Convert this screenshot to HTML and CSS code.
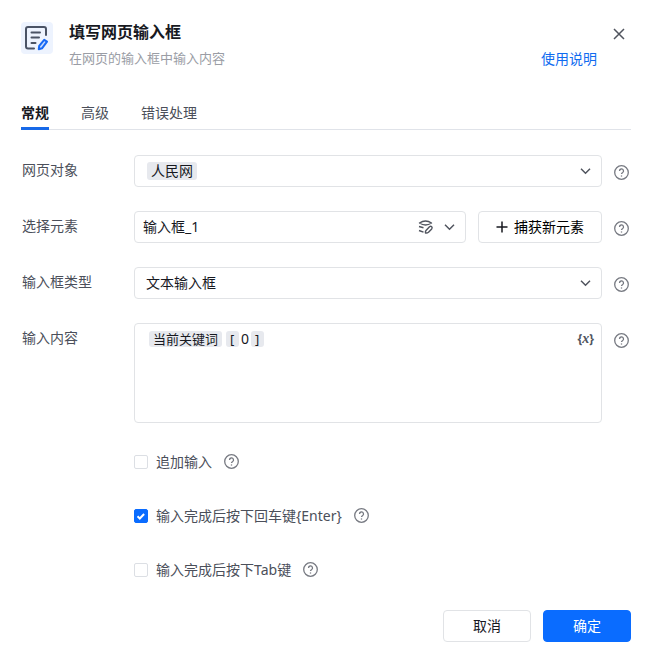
FILE: index.html
```html
<!DOCTYPE html>
<html lang="zh-CN">
<head>
  <meta charset="UTF-8" />
  <meta name="viewport" content="width=device-width, initial-scale=1.0" />
  <title>填写网页输入框</title>
  <link rel="stylesheet" href="styles.css">
</head>
<body>
  <svg class="defs" aria-hidden="true">
    <symbol id="help" viewBox="0 0 16 16">
      <circle cx="7.5" cy="7.5" r="6.8" />
      <path d="M5.5 6a2 2 0 1 1 3 1.7c-.7.4-1 .8-1 1.4" />
      <path d="M7.5 10.4v1.2" />
    </symbol>
    <symbol id="arrow" viewBox="0 0 12 12">
      <path d="M1 3.7 5.5 8.2 10 3.7" />
    </symbol>
  </svg>

  <form class="dialog">
    <header class="header">
      <svg class="logo" viewBox="0 0 32 32" aria-hidden="true">
        <rect width="32" height="32" rx="4" fill="#edf3fe" />
        <g fill="none" stroke="#4a5365" stroke-width="2" stroke-linecap="round" stroke-linejoin="round">
          <path d="M25 13V7a2 2 0 0 0-2-2H7a2 2 0 0 0-2 2v17.5a2 2 0 0 0 2 2h6" />
          <path d="M10.5 10.5h8.5M10.5 15.5h7.5M10.5 21h4" />
        </g>
        <path d="m23.2 17.8 2.8 1.8-5 6.700-3.200.9.4-3.400z" fill="#c9dcfd" stroke="#1769f5" stroke-width="2" stroke-linejoin="round" />
      </svg>
      <div class="titles">
        <h1>填写网页输入框</h1>
        <p>在网页的输入框中输入内容</p>
      </div>
      <div class="actions">
        <button type="button" class="close" aria-label="关闭">
          <svg viewBox="0 0 12 12"><path d="m1 1 10 10M11 1 1 11" /></svg>
        </button>
        <a href="#doc">使用说明</a>
      </div>
    </header>

    <nav class="tabs">
      <button type="button" class="tab active">常规</button>
      <button type="button" class="tab">高级</button>
      <button type="button" class="tab">错误处理</button>
    </nav>

    <div class="rows">
      <div class="row">
        <label for="page">网页对象</label>
        <div class="box box-tag">
          <select id="page" class="tag"><option>人民网</option></select>
          <svg class="arrow"><use href="#arrow" /></svg>
        </div>
        <svg class="help"><use href="#help" /></svg>
      </div>

      <div class="row">
        <label for="element">选择元素</label>
        <div class="pair">
          <div class="box box-element">
            <select id="element"><option>输入框_1</option></select>
            <button type="button" class="edit" aria-label="编辑元素">
              <svg viewBox="0 0 16 16">
                <path d="M1.500 4Q4.500 2 7.500 2t6 2Q10.500 6 7.500 6t-6-2z" />
                <path d="M1 7.5 5.500 8.700M1 11.500l4.500 1.700" />
                <path d="M8 11.500 11.500 7.700q1.200-.9 2.200 0 .9 1 0 2.200L10.500 13.300q-1.300 1-3 .7-.4-1.400.5-2.500z" />
              </svg>
            </button>
            <svg class="arrow"><use href="#arrow" /></svg>
          </div>
          <button type="button" class="btn capture">
            <svg viewBox="0 0 12 12"><path d="M6 .5v11M.5 6h11" /></svg>捕获新元素
          </button>
        </div>
        <svg class="help"><use href="#help" /></svg>
      </div>

      <div class="row">
        <label for="type">输入框类型</label>
        <div class="box box-type">
          <select id="type"><option>文本输入框</option></select>
          <svg class="arrow"><use href="#arrow" /></svg>
        </div>
        <svg class="help"><use href="#help" /></svg>
      </div>

      <div class="row">
        <label for="content">输入内容</label>
        <div class="editor">
          <div class="tokens">
            <span class="token">当前关键词</span>
            <span class="token bracket">[</span>
            <input type="text" class="index" value="0" aria-label="索引">
            <span class="token bracket">]</span>
            <button type="button" class="var">{<i>x</i>}</button>
          </div>
          <textarea id="content"></textarea>
        </div>
        <svg class="help"><use href="#help" /></svg>
      </div>
    </div>

    <div class="checks">
      <div class="check">
        <label><input type="checkbox">追加输入</label>
        <svg class="help"><use href="#help" /></svg>
      </div>
      <div class="check">
        <label><input type="checkbox" checked>输入完成后按下回车键{Enter}</label>
        <svg class="help"><use href="#help" /></svg>
      </div>
      <div class="check">
        <label><input type="checkbox">输入完成后按下Tab键</label>
        <svg class="help"><use href="#help" /></svg>
      </div>
    </div>

    <footer class="footer">
      <button type="button" class="btn">取消</button>
      <button type="submit" class="btn primary">确定</button>
    </footer>
  </form>
</body>
</html>
```
FILE: styles.css
```css
* {
  box-sizing: border-box;
  margin: 0;
  padding: 0;
}
body {
  background: #fff;
  color: #17191f;
  font-family: "Noto Sans", "Noto Sans CJK SC", sans-serif;
  font-size: 14px;
  line-height: 20px;
}
button, input, select, textarea {
  font: inherit;
  color: inherit;
  background: none;
  border: none;
  outline: none;
}
button {
  cursor: pointer;
}
svg {
  fill: none;
  stroke: #50545e;
  stroke-width: 1.5;
  flex: none;
}
.defs {
  position: absolute;
  width: 0;
  height: 0;
}
.dialog {
  padding: 20px 21px;
}

/* header */
.header {
  display: flex;
  align-items: flex-start;
  gap: 16px;
}
.logo {
  width: 32px;
  height: 32px;
  margin-top: 2px;
  stroke: none;
}
.titles {
  flex: 1;
}
.titles h1 {
  font-size: 16px;
  line-height: 24px;
  font-weight: bold;
}
.titles p {
  margin-top: 4px;
  font-size: 13px;
  color: #9a9da5;
}
.actions {
  display: flex;
  flex-direction: column;
  align-items: flex-end;
  gap: 1px;
}
.close {
  display: flex;
  padding: 8px 6px;
}
.close svg {
  width: 12px;
  height: 12px;
}
.actions a {
  margin-right: 34px;
  color: #0f6bf0;
  text-decoration: none;
}

/* tabs */
.tabs {
  display: flex;
  gap: 32px;
  margin-top: 33px;
  border-bottom: 1px solid #e0e3e9;
}
.tab {
  height: 28px;
  margin-bottom: -1px;
  padding-bottom: 4px;
  color: #4b4f5a;
  border-bottom: 3px solid transparent;
}
.tab.active {
  color: #17191f;
  font-weight: bold;
  border-color: #1769e8;
}

/* form rows */
.rows {
  display: grid;
  gap: 24px;
  margin-top: 25px;
}
.row {
  display: grid;
  grid-template-columns: 113px 1fr 29px;
  align-items: start;
}
.row > label {
  padding-left: 1px;
  line-height: 30px;
  color: #4b4f5a;
}
.help {
  width: 16px;
  height: 16px;
  stroke: #777a82;
  stroke-width: 1.3;
}
.row > .help {
  margin: 10px 0 0 12px;
}
.box, .btn {
  display: flex;
  align-items: center;
  height: 32px;
  border: 1px solid #e1e3e6;
  border-radius: 4px;
}
.box {
  justify-content: space-between;
  padding: 0 9px 0 11px;
}
.box-tag {
  padding-left: 12px;
}
.box-element {
  flex: 1;
  gap: 10px;
  padding-left: 8px;
}
.box select {
  appearance: none;
  min-width: 0;
}
.box select:not(.tag) {
  flex: 1;
}
.tag {
  height: 18px;
  padding: 0 4px;
  line-height: 18px;
  background: #e7e9ee;
  border-radius: 3px;
}
.arrow {
  width: 12px;
  height: 12px;
}
.edit {
  display: flex;
}
.edit svg {
  width: 16px;
  height: 16px;
  stroke-width: 1.4;
  stroke-linejoin: round;
}
.pair {
  display: flex;
  gap: 12px;
}
.btn {
  justify-content: center;
  min-width: 88px;
}
.capture {
  gap: 6px;
  width: 124px;
  color: #000;
}
.capture svg {
  width: 12px;
  height: 12px;
  stroke: #17191f;
}
.editor {
  display: flex;
  flex-direction: column;
  height: 100px;
  padding: 7px 7px 4px 14px;
  border: 1px solid #e1e3e6;
  border-radius: 4px;
}
.tokens {
  display: flex;
  align-items: center;
  height: 16px;
}
.token {
  padding: 0 4px;
  font-size: 13px;
  line-height: 16px;
  background: #e7e9ee;
  border-radius: 3px;
}
.token + .bracket {
  margin-left: 4px;
}
.bracket {
  width: 13px;
}
.index {
  width: 12px;
  text-align: center;
}
.var {
  margin-left: auto;
  font-size: 12px;
  line-height: 16px;
  font-weight: bold;
  color: #50545e;
}
.var i {
  font-family: "Liberation Serif", serif;
  font-size: 14px;
}
.editor textarea {
  flex: 1;
  resize: none;
}

/* checkboxes */
.checks {
  display: grid;
  gap: 34px;
  margin: 29px 0 0 113px;
}
.check {
  display: flex;
  align-items: center;
  gap: 12px;
  color: #4b4f5a;
}
.check label {
  display: flex;
  align-items: center;
  gap: 8px;
}
.check input {
  appearance: none;
  width: 14px;
  height: 14px;
  border: 1px solid #dcdfe4;
  border-radius: 2px;
}
.check input:checked {
  background: #0a6cff url("data:image/svg+xml,%3Csvg xmlns='http://www.w3.org/2000/svg' viewBox='0 0 14 14'%3E%3Cpath d='m3.5 7.3 2.3 2.2 4.3-4.5' fill='none' stroke='white' stroke-width='2'/%3E%3C/svg%3E") center / 14px no-repeat;
  border-color: #0a6cff;
}

/* footer */
.footer {
  display: flex;
  justify-content: flex-end;
  gap: 12px;
  margin-top: 30px;
}
.primary {
  color: #fff;
  background: #0a6cff;
  border-color: #0a6cff;
}
```
